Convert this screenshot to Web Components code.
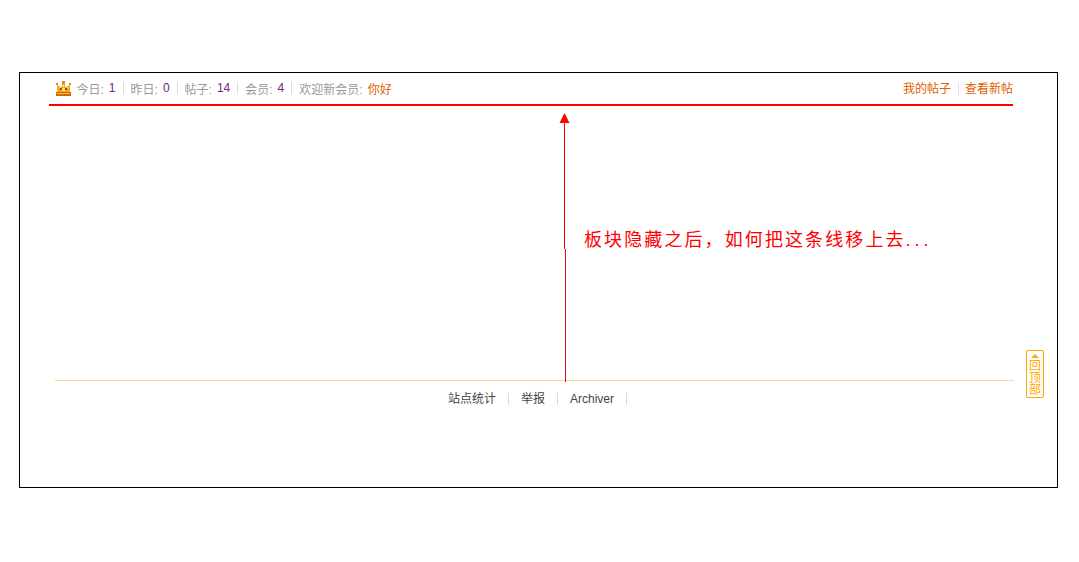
<!DOCTYPE html>
<html lang="zh">
<head>
<meta charset="utf-8">
<title>板块隐藏</title>
<style>
  body { margin: 0; background: #fff; font: 12px "Liberation Sans", "Noto Sans CJK SC", sans-serif; }
</style>
</head>
<body>
<forum-frame>
  <stats-bar>
    <stat-item label="今日" value="1"></stat-item>
    <stat-item label="昨日" value="0"></stat-item>
    <stat-item label="帖子" value="14"></stat-item>
    <stat-item label="会员" value="4"></stat-item>
    <stat-item label="欢迎新会员" value="你好" link last></stat-item>
    <a slot="links">我的帖子</a>
    <a slot="links">查看新帖</a>
  </stats-bar>
  <arrow-note>板块隐藏之后，如何把这条线移上去<span style="letter-spacing:4px">...</span></arrow-note>
  <site-footer>
    <a>站点统计</a>
    <a>举报</a>
    <a>Archiver</a>
  </site-footer>
  <back-top></back-top>
</forum-frame>
<script>
// page frame with the black outline
class ForumFrame extends HTMLElement {
  constructor() {
    super();
    this.attachShadow({ mode: "open" });
    this.shadowRoot.innerHTML = `
      <style>
        :host {
          display: block;
          position: relative;
          box-sizing: border-box;
          width: 1039px;
          height: 416px;
          margin: 72px 0 0 19px;
          border: 1px solid #000;
        }
      </style>
      <slot></slot>
    `;
  }
}

class StatItem extends HTMLElement {
  constructor() {
    super();
    this.attachShadow({ mode: "open" });
  }

  connectedCallback() {
    const isLink = this.hasAttribute("link");
    this.shadowRoot.innerHTML = `
      <style>
        :host { display: inline-flex; align-items: center; color: #999; }
        b { font-weight: normal; margin-left: 5px; color: ${isLink ? "#e05e00" : "#71297a"}; }
        i { width: 1px; height: 12px; margin: 0 7px 0 7px; background: #ddd; }
      </style>
      <span>${this.getAttribute("label")}:</span><b>${this.getAttribute("value")}</b>
      ${this.hasAttribute("last") ? "" : "<i></i>"}
    `;
  }
}

class StatsBar extends HTMLElement {
  constructor() {
    super();
    this.attachShadow({ mode: "open" });
    this.shadowRoot.innerHTML = `
      <style>
        :host {
          display: flex;
          align-items: center;
          box-sizing: border-box;
          width: 964px;
          height: 33px;
          margin-left: 29px;
          padding: 0 0 1px 7px;
          border-bottom: 2px solid #f00;
        }
        svg { margin-right: 5.5px; flex: none; }
        .stats { display: flex; align-items: center; flex: 1; }
        .links { display: flex; align-items: center; padding-top: 2px; }
        ::slotted(a) { color: #e05e00; line-height: 12px; }
        ::slotted(a:first-of-type) { padding-right: 7px; margin-right: 6px; border-right: 1px solid #ddd; }
      </style>
      <svg width="15" height="15" viewBox="0 0 15 15" shape-rendering="crispEdges">
        <path fill="#e88a10" d="M0 2h2v2H0zM6 0h3v3H6zM13 2h2v2h-2z"/>
        <path fill="#f5a820" d="M1 4h1v1h2v1h2V3h3v3h2V5h2V4h1v7H1z"/>
        <path fill="#fff2c0" d="M3 6h1v1H3zM7 4h1v2H7zM11 6h1v1h-1z"/>
        <path fill="#c8321a" d="M4 7h2v2H4zM9 7h2v2H9z"/>
        <path fill="#fde08a" d="M6 7h3v3H6z"/>
        <path fill="#cf6a06" d="M0 11h15v4H0z"/>
        <path fill="#f9bc40" d="M1 12h13v1H1z"/>
      </svg>
      <div class="stats"><slot></slot></div>
      <div class="links"><slot name="links"></slot></div>
    `;
  }
}

// red annotation drawn over the page, arrow points at the red line
class ArrowNote extends HTMLElement {
  constructor() {
    super();
    this.attachShadow({ mode: "open" });
    this.shadowRoot.innerHTML = `
      <style>
        :host { display: block; height: 274px; }
        svg { position: absolute; left: 530px; top: 30px; }
        span {
          position: absolute;
          left: 564px;
          top: 154px;
          color: #f00;
          font-size: 18px;
          line-height: 26px;
          letter-spacing: 2.1px;
          white-space: nowrap;
        }
      </style>
      <svg width="20" height="280" viewBox="0 0 20 280" shape-rendering="crispEdges">
        <path fill="#f00" d="M14 19h1v127h-1z"/>
        <path fill="#d8101c" d="M15 146h1v133h-1z"/>
        <path fill="#f00" shape-rendering="auto" d="M14.5 10 L19.5 20 L9.5 20 Z"/>
      </svg>
      <span><slot></slot></span>
    `;
  }
}

class SiteFooter extends HTMLElement {
  constructor() {
    super();
    this.attachShadow({ mode: "open" });
    this.shadowRoot.innerHTML = `
      <style>
        :host {
          display: flex;
          justify-content: center;
          align-items: center;
          box-sizing: border-box;
          width: 959px;
          height: 36px;
          margin-left: 35px;
          padding: 1px 0 0 18px;
          border-top: 1px solid #ffd699;
        }
        ::slotted(a) {
          color: #444;
          line-height: 12px;
          padding-right: 12px;
          margin-right: 12px;
          border-right: 1px solid #d5dbe5;
        }
      </style>
      <slot></slot>
    `;
  }
}

class BackTop extends HTMLElement {
  constructor() {
    super();
    this.attachShadow({ mode: "open" });
    this.shadowRoot.innerHTML = `
      <style>
        :host {
          position: absolute;
          left: 1006px;
          top: 277px;
          display: flex;
          flex-direction: column;
          align-items: center;
          box-sizing: border-box;
          width: 18px;
          height: 48px;
          padding-top: 3px;
          border: 1px solid #ffa800;
          border-radius: 2px;
          color: #ffa800;
          font-size: 12px;
          line-height: 12px;
        }
        u {
          width: 0;
          height: 0;
          margin-bottom: 2px;
          border: 4px solid transparent;
          border-top: 0;
          border-bottom: 4px solid #ffa800;
        }
        span { width: 12px; text-align: center; }
      </style>
      <u></u>
      <span>回顶部</span>
    `;
  }
}

customElements.define("forum-frame", ForumFrame);
customElements.define("stat-item", StatItem);
customElements.define("stats-bar", StatsBar);
customElements.define("arrow-note", ArrowNote);
customElements.define("site-footer", SiteFooter);
customElements.define("back-top", BackTop);
</script>
</body>
</html>
